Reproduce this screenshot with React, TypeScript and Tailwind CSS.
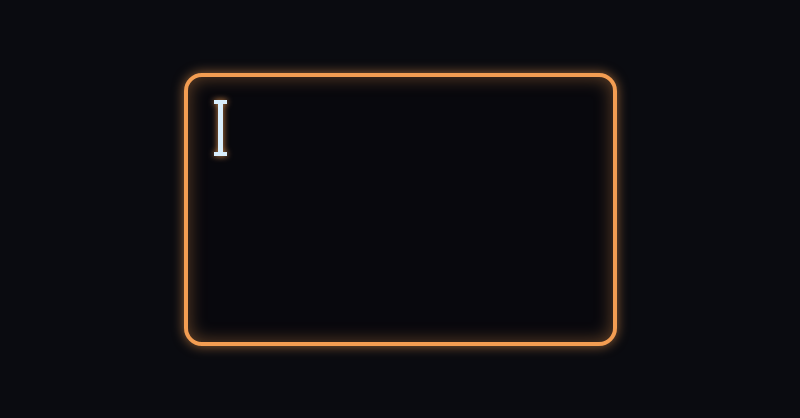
import React from 'react';

export default function App() {
  return (
    <div className="flex h-[418px] w-[800px] items-center justify-center bg-[#0a0b10]">
      <div className="h-[273px] w-[433px] rounded-[18px] border-4 border-[#f39d52] bg-[#08080d] px-[26px] py-[23px] shadow-[0_0_12px_rgba(243,157,82,0.6),inset_0_0_18px_rgba(243,157,82,0.4)]">
        {/* text caret */}
        <div className="flex w-[13px] flex-col items-center drop-shadow-[0_0_3px_rgba(243,157,82,0.9)]">
          <div className="h-[4px] w-[13px] bg-[#d9eefc]" />
          <div className="h-[48px] w-[5px] bg-[#d9eefc]" />
          <div className="h-[4px] w-[13px] bg-[#d9eefc]" />
        </div>
      </div>
    </div>
  );
}
